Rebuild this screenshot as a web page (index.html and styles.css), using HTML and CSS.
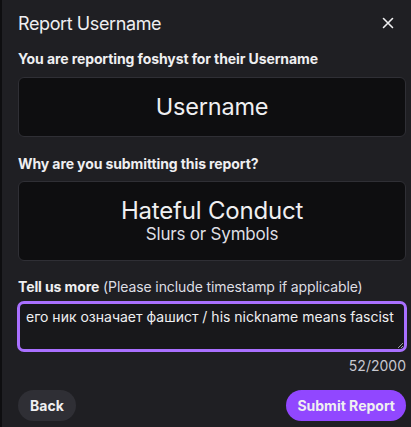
FILE: index.html
```html
<!DOCTYPE html>
<html>
<head>
<meta charset="utf-8">
<link rel="stylesheet" href="styles.css">
</head>
<body>
<div class="page">
  <div class="edge"></div>
  <div class="modal">
    <div class="header">
      <h1 class="title">Report Username</h1>
      <button class="close" aria-label="Close">
        <svg width="12" height="12" viewBox="0 0 12 12"><path d="M1.5 1.5L10.5 10.5M10.5 1.5L1.5 10.5" stroke="#efeff1" stroke-width="1.6" stroke-linecap="round"/></svg>
      </button>
    </div>
    <div class="label">You are reporting foshyst for their Username</div>
    <div class="card card-single"><span class="card-title">Username</span></div>
    <div class="label label-second">Why are you submitting this report?</div>
    <div class="card card-double">
      <span class="card-title">Hateful Conduct</span>
      <span class="card-sub">Slurs or Symbols</span>
    </div>
    <div class="label label-third"><b>Tell us more</b> <span class="hint">(Please include timestamp if applicable)</span></div>
    <div class="textarea">его ник означает фашист / his nickname means fascist<svg class="grip" width="7" height="7" viewBox="0 0 7 7"><path d="M6 1L1 6M6 4L4 6" stroke="#9a9aa0" stroke-width="1"/></svg></div>
    <div class="count">52/2000</div>
    <div class="actions">
      <button class="btn btn-back">Back</button>
      <button class="btn btn-submit">Submit Report</button>
    </div>
  </div>
</div>
</body>
</html>
```
FILE: styles.css
```css
* { box-sizing: border-box; }
html, body { margin: 0; padding: 0; }
body {
  width: 411px;
  height: 427px;
  overflow: hidden;
  background: #0e0e10;
  font-family: Inter, "Noto Sans", sans-serif;
  color: #efeff1;
}
.page { display: flex; height: 427px; }
.edge { width: 2px; background: #0e0e10; flex: none; }
.modal {
  flex: 1;
  background: #1f1f23;
  padding: 11px 5px 0 16px;
  display: flex;
  flex-direction: column;
}
.header {
  display: flex;
  justify-content: space-between;
  align-items: center;
  height: 24px;
}
.title {
  margin: 0;
  font-size: 18px;
  font-weight: 400;
  letter-spacing: -0.4px;
}
.close {
  background: none;
  border: 0;
  padding: 0;
  margin-right: 12px;
  width: 12px;
  height: 12px;
  display: flex;
}
.label {
  margin-top: 15px;
  font-size: 14px;
  font-weight: 700;
  line-height: 17px;
  letter-spacing: -0.1px;
}
.label-second { margin-top: 18px; }
.label-third { margin-top: 17px; font-weight: 400; }
.label-third b { font-weight: 700; }
.hint { color: #dedee3; }
.card {
  margin-top: 9px;
  background: #0e0e10;
  border: 1px solid #2f2f35;
  border-radius: 6px;
  display: flex;
  flex-direction: column;
  align-items: center;
  justify-content: center;
}
.card-single { height: 60px; margin-top: 10px; }
.card-double { height: 80px; }
.card-title { font-size: 23.5px; line-height: 28px; letter-spacing: -0.2px; }
.card-double .card-title { font-size: 24px; margin-top: -2px; }
.card-sub { font-size: 17px; line-height: 19px; color: #dedee3; letter-spacing: -0.2px; }
.textarea {
  position: relative;
  margin-top: 6px;
  margin-left: -1px;
  margin-right: -1px;
  height: 51px;
  border: 3px solid #a970ff;
  border-radius: 7px;
  background: #18181b;
  padding: 4px 6px;
  font-size: 14px;
  line-height: 17px;
  color: #efeff1;
}
.grip { position: absolute; right: 0; bottom: 0; }
.count {
  text-align: right;
  font-size: 14px;
  line-height: 17px;
  color: #c8c8d0;
  margin-top: 5px;
}
.actions {
  display: flex;
  justify-content: space-between;
  margin-top: 16px;
}
.btn {
  border: 0;
  border-radius: 16px;
  height: 31px;
  font-family: Inter, "Noto Sans", sans-serif;
  font-size: 14px;
  font-weight: 700;
  color: #efeff1;
  padding: 0 12px;
}
.btn-back { background: #2f2f35; }
.btn-submit { background: #9147ff; padding: 0 11px; }
```
